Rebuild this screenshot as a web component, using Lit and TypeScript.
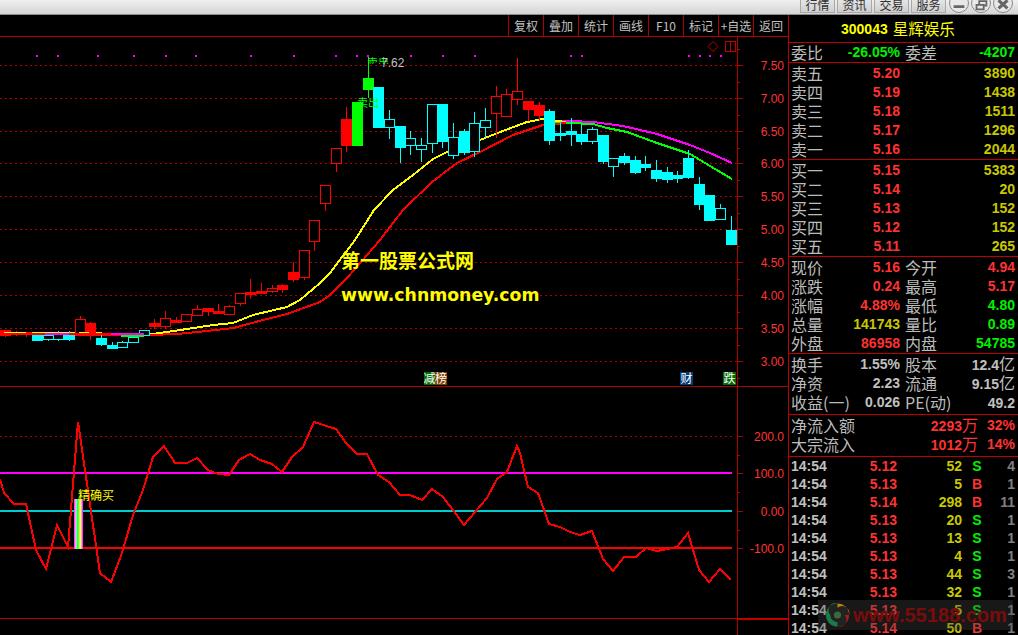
import { LitElement, html, svg, css } from "lit";
import { customElement } from "lit/decorators.js";

type Candle = [string, number, number, number, number];

const CANDLES: Candle[] = [
  ["r",330,335,330,336],["r",332,334,331,335],["r",332,334,332,336],["c",335,340,335,340],["C",335,339,334,340],
  ["C",333,339,331,340],["c",335,339,331,340],["R",319,334,316,334],["r",323,334,322,339],["c",338,344,334,345],
  ["c",345,348,342,348],["C",342,347,341,347],["C",337,342,337,342],["C",330,335,330,335],["r",323,326,319,328],
  ["R",318,326,311,328],["r",320,322,317,322],["R",314,321,314,321],["R",309,315,305,315],["r",308,311,308,315],
  ["r",311,313,304,313],["R",306,314,305,314],["R",293,303,293,305],["r",292,294,279,298],["r",291,293,283,293],
  ["R",288,291,285,292],["r",285,289,284,292],["r",272,279,262,281],["R",250,277,250,279],["R",220,241,220,250],
  ["R",185,203,185,210],["R",148,163,148,171],["r",119,145,107,151],["g",102,145,102,145],["g",78,89,57,97],
  ["c",87,127,87,127],["C",119,127,110,138],["c",126,147,126,162],["C",138,145,131,154],["C",145,149,138,161],
  ["C",104,143,104,152],["c",104,141,104,147],["C",137,155,123,158],["c",131,152,129,154],["C",123,151,112,156],
  ["C",120,127,108,137],["R",96,113,86,137],["R",94,116,89,116],["R",91,99,58,104],["r",101,109,101,120],
  ["r",105,115,102,120],["c",111,140,109,144],["c",133,135,121,140],["c",131,134,118,145],["c",134,141,124,144],
  ["C",129,141,127,143],["c",135,161,135,163],["C",158,166,158,176],["c",156,162,153,164],["c",160,172,156,173],
  ["c",164,167,156,170],["c",170,178,160,181],["c",172,179,167,182],["c",175,178,171,182],["c",158,177,150,178],
  ["c",184,204,177,209],["c",195,220,195,220],["C",208,219,204,219],["c",230,244,216,244],
];

const YELLOW = "0,333 50,333 153,334 187,329 213,325 233,323 253,315 287,307 300,300 320,283 330,273 355,240 374,210 393,190 413,175 433,159 447,152 480,140 500,132 527,122 543,119 566,122";
const RED = "0,334 150,335 177,334 207,331 233,328 267,319 287,314 320,302 330,295 348,277 380,240 403,210 432,182 457,163 480,152 513,135 543,125 566,123";
const MAGENTA = "555,121 571,121 593,122 623,126 657,134 690,145 710,153 732,163";
const GREEN = "555,122 571,123 593,124 607,128 627,132 657,143 690,154 710,166 732,179";
const INDICATOR = "0,479 4,493 14,504 26,504 36,550 46,569 57,525 68,547 78,422 100,573 111,582 122,553 133,515 143,490 153,457 164,446 175,463 187,463 197,458 208,470 218,474 229,475 239,460 250,454 260,460 272,464 282,472 292,457 303,447 314,422 336,429 346,443 357,454 367,454 378,475 389,482 400,495 410,495 422,500 432,489 443,497 453,510 464,525 487,498 497,479 507,472 517,446 520,453 528,487 538,493 549,524 560,527 570,532 580,535 592,531 603,559 613,571 624,557 636,557 646,548 657,551 667,549 677,547 688,533 699,570 709,582 720,569 731,580";

const PRICE_GRID = [["7.50",65.5],["7.00",98.5],["6.50",131.5],["6.00",163.5],["5.50",196.5],["5.00",229.5],["4.50",262.5],["4.00",295.5],["3.50",328.5],["3.00",361.5]] as [string, number][];
const LOW_AXIS = [["200.0",436.5],["100.0",473.5],["0.00",511.5],["-100.0",548.5]] as [string, number][];
const DOTS = [36,57,97,133,165,195,250,293,335,356,367,410,442,474,570,581,688,699,709,720];
const RAINBOW = ["#ff44ff","#ff99ff","#66ffcc","#33ff33","#66ff33","#ccff33","#ffff33","#ff99ff","#ff33ff"];

const SELL = [["卖五","5.20","3890"],["卖四","5.19","1438"],["卖三","5.18","1511"],["卖二","5.17","1296"],["卖一","5.16","2044"]];
const BUY = [["买一","5.15","5383"],["买二","5.14","20"],["买三","5.13","152"],["买四","5.12","152"],["买五","5.11","265"]];
const QUOTE = [
  ["现价","5.16","r","今开","4.94","r"],["涨跌","0.24","r","最高","5.17","r"],["涨幅","4.88%","r","最低","4.80","g"],
  ["总量","141743","y","量比","0.89","g"],["外盘","86958","r","内盘","54785","g"],
];
const STATS = [["换手","1.55%","","股本","12.4","亿"],["净资","2.23","","流通","9.15","亿"],["收益(一)","0.026","","PE(动)","49.2",""]];
const TICKS = [["5.12","52","S","4"],["5.13","5","B","1"],["5.14","298","B","11"],["5.13","20","S","1"],["5.13","13","S","1"],["5.13","4","S","1"],["5.13","44","S","3"],["5.13","32","S","1"],["5.13","5","S","1"],["5.14","50","B","1"]];
const TOOLS = ["复权","叠加","统计","画线","F10","标记","+自选","返回"];
const NAV = ["行情","资讯","交易","服务"];

const COLORS: Record<string, string> = { r: "#f00", R: "#f00", c: "#0ff", C: "#0ff", g: "#0f0" };

@customElement("app-root")
export class AppRoot extends LitElement {
  static styles = css`
    :host { display: block; width: 1018px; height: 635px; overflow: hidden; background: #000; position: relative;
      font-family: "Noto Sans CJK SC", "Liberation Sans", sans-serif; }
    .top { border-bottom: 1px solid #8c8c8c; background: linear-gradient(#f0f0f0, #d4d4d4); display: flex; justify-content: flex-end; align-items: flex-end; gap: 2px; padding: 0 5px 1px 0; box-sizing: content-box; overflow: hidden; height: 13px; }
    .nav { flex: none; width: 33px; height: 20px; border: 1px solid #a8a8a8; background: linear-gradient(#f4f4f4, #cfcfcf); font-size: 12px; line-height: 25px; color: #303030; text-align: center; overflow: hidden; }
    .nav + .round { margin-left: 1px; }
    .round { flex: none; width: 20px; height: 20px; box-sizing: border-box; border-radius: 50%; border: 1px solid #888; background: #e8e8e8; display: block; }
    .main { display: flex; height: 620px; }
    .left { width: 788px; flex: none; display: flex; flex-direction: column; }
    .tools { height: 21px; flex: none; border-bottom: 1px solid #b00000; display: flex; justify-content: flex-end; }
    .tool { flex: none; width: 34px; border-left: 1px solid #b00000; color: #c0c0c0; font-size: 12px; line-height: 21px; text-align: center; white-space: nowrap; }
    .chart { display: block; flex: none; }
    .ax { font: 12px "Liberation Sans", sans-serif; fill: #f33; text-anchor: end; }
    .big1 { font: 700 19px "Noto Sans CJK SC", sans-serif; fill: #ff0; }
    .big2 { font: 700 17.3px "DejaVu Sans", sans-serif; fill: #ff0; }
    .tag { font: 12px "Noto Sans CJK SC", sans-serif; fill: #fff; text-anchor: middle; }
    .buy { font: 12px "Noto Sans CJK SC", sans-serif; fill: #ff0; }
    .sig { font: 11px "Noto Sans CJK SC", sans-serif; fill: #0f0; }
    .hi { font: 12px "Liberation Sans", sans-serif; fill: #c0c0c0; }

    .panel { flex: 1; border-left: 1px solid #c00000; color: #c0c0c0; overflow: hidden; font: 700 14px "Liberation Sans", sans-serif; }
    .head { height: 27px; border-bottom: 1px solid #c00000; color: #ff0; display: flex; align-items: center; justify-content: flex-start; gap: 5px; padding-left: 52px; }
    .head b { font: 400 15.5px/1 "Noto Sans CJK SC", sans-serif; }
    .sect { border-bottom: 1px solid #c00000; }
    .pad { padding-top: 1px; }
    .pad3 { padding-top: 1px; padding-bottom: 2px; }
    .quad { display: grid; grid-template-columns: 48px 61px 41px 1fr; grid-auto-rows: 19px; height: 19px; line-height: 19px; padding: 0 3px 0 2px; align-items: center; white-space: nowrap; }
    .lbl { font: 400 16px/19px "Noto Sans CJK SC", sans-serif; color: #bcbcbc; }
    .lb2 { padding-left: 5px; }
    .val { text-align: right; }
    .r { color: #ff3232; } .g { color: #00f000; } .y { color: #c8c800; }
    .unit { font: 400 16px/1 "Noto Sans CJK SC", sans-serif; color: inherit; }
    .flow { display: grid; grid-template-columns: 1fr auto 37px; grid-auto-rows: 19px; height: 19px; line-height: 19px; padding: 0 3px 0 2px; white-space: nowrap; align-items: center; }
    .tick { display: grid; grid-template-columns: 50px 56px 65px 30px 1fr; height: 18px; line-height: 18px; padding: 0 3px 0 2px; }
    .tick .cnt { text-align: right; color: #808080; }
    .tick .side { text-align: center; }

    .wm { position: absolute; left: 818px; top: 600px; width: 195px; height: 30px; background: rgba(70,70,70,.35); display: flex; align-items: center; gap: 3px; padding-left: 7px; box-sizing: border-box; font: 700 20px/30px "Liberation Sans", sans-serif; color: #7a0c0c; white-space: nowrap; }
    .wm svg { flex: none; }
  `;

  private candle(c: Candle, i: number) {
    const [t, top, bot, hi, lo] = c;
    const x = Math.round(i * 10.67);
    const col = COLORS[t];
    const hollow = t === "R" || t === "C";
    const mid = x + 5.5;
    return svg`
      <line x1=${mid} x2=${mid} y1=${hi} y2=${lo + 1} stroke=${col} stroke-width="1"></line>
      <rect x=${hollow ? x + 0.5 : x} y=${hollow ? top + 0.5 : top} width=${hollow ? 10 : 11} height=${hollow ? bot - top : bot - top + 1}
        fill=${hollow ? "#000" : col} stroke=${hollow ? col : "none"} stroke-width="1"></rect>`;
  }

  private chart() {
    const minor = [...PRICE_GRID.slice(0, -1).map(([, y]) => y + 16.5), 49, 378];
    const lowMinor = [455, 492, 530];
    return html`<svg class="chart" width="788" height="598" viewBox="0 37 788 598" shape-rendering="crispEdges">
      <defs><clipPath id="flag"><rect x="360" y="56" width="40" height="8"></rect></clipPath></defs>
      ${DOTS.map((x) => svg`<rect x=${x} y="55" width="2" height="2" fill="#f0f"></rect>`)}
      ${PRICE_GRID.map(([, y]) => svg`<line x1="0" x2="737" y1=${y} y2=${y} stroke="#b00000" stroke-dasharray="2 3"></line>`)}
      <line x1="0" x2="732" y1="436.5" y2="436.5" stroke="#b00000" stroke-dasharray="2 3"></line>

      <polyline points=${MAGENTA} fill="none" stroke="#f0f" stroke-width="2"></polyline>
      <polyline points=${GREEN} fill="none" stroke="#0f0" stroke-width="2"></polyline>
      <polyline points=${YELLOW} fill="none" stroke="#ff0" stroke-width="2"></polyline>
      <polyline points=${RED} fill="none" stroke="#f00" stroke-width="2"></polyline>
      ${CANDLES.map((c, i) => this.candle(c, i))}
      <line x1="0" x2="45" y1="334" y2="334" stroke="#f00" stroke-width="2"></line>
      <line x1="69" x2="111" y1="334" y2="334" stroke="#f00" stroke-width="2"></line>
      <line x1="4" x2="26" y1="332.5" y2="332.5" stroke="#ff0"></line>
      <line x1="79" x2="89" y1="332.5" y2="332.5" stroke="#ff0"></line>
      <line x1="45" x2="69" y1="334" y2="334" stroke="#f0f" stroke-width="2"></line>
      <line x1="111" x2="144" y1="334" y2="334" stroke="#f0f" stroke-width="2"></line>
      <line x1="121" x2="144" y1="336" y2="336" stroke="#0f0" stroke-width="2"></line>

      <path d="M713 41.5 L718 46.5 L713 51.5 L708 46.5 Z" fill="none" stroke="#c00000" shape-rendering="auto"></path>
      <path d="M725.5 41.5 H735.5 V51.5 H725.5 Z M730.5 41.5 V51.5" fill="none" stroke="#c00000"></path>

      <text class="sig" x="367" y="67" clip-path="url(#flag)">卖出</text>
      <text class="hi" x="381" y="67">7.62</text>
      <text class="sig" x="357" y="107">卖出</text>

      <text class="big1" x="341" y="268">第一股票公式网</text>
      <text class="big2" x="341" y="301">www.chnmoney.com</text>

      <rect x="424" y="372" width="11" height="13" fill="#006c00"></rect>
      <rect x="435" y="372" width="12" height="13" fill="#7c4000"></rect>
      <text class="tag" x="429.5" y="383">减</text>
      <text class="tag" x="441" y="383">榜</text>
      <rect x="680" y="372" width="13" height="13" fill="#003c78"></rect>
      <text class="tag" x="686.5" y="383">财</text>
      <rect x="723" y="372" width="13" height="13" fill="#006c00"></rect>
      <text class="tag" x="729.5" y="383">跌</text>

      <line x1="0" x2="788" y1="386.5" y2="386.5" stroke="#b00000"></line>
      <line x1="0" x2="737" y1="618.5" y2="618.5" stroke="#b00000"></line>
      <line x1="737" x2="788" y1="618.5" y2="618.5" stroke="#c00000" stroke-width="2"></line>
      <line x1="737.5" x2="737.5" y1="36" y2="635" stroke="#b00000"></line>
      ${PRICE_GRID.map(([, y]) => svg`<line x1="737" x2="743" y1=${y} y2=${y} stroke="#b00000"></line>`)}
      ${minor.map((y) => svg`<line x1="737" x2="740" y1=${y} y2=${y} stroke="#b00000"></line>`)}
      ${LOW_AXIS.map(([, y]) => svg`<line x1="737" x2="743" y1=${y} y2=${y} stroke="#b00000"></line>`)}
      ${lowMinor.map((y) => svg`<line x1="737" x2="740" y1=${y + 0.5} y2=${y + 0.5} stroke="#b00000"></line>`)}
      ${PRICE_GRID.map(([t, y]) => svg`<text class="ax" x="784" y=${y + 4.5}>${t}</text>`)}
      ${LOW_AXIS.map(([t, y]) => svg`<text class="ax" x="784" y=${y + 4.5}>${t}</text>`)}

      <line x1="0" x2="732" y1="473" y2="473" stroke="#f0f" stroke-width="2"></line>
      <line x1="0" x2="732" y1="511" y2="511" stroke="#00cccc" stroke-width="2"></line>
      <line x1="0" x2="732" y1="548" y2="548" stroke="#f00" stroke-width="2"></line>
      ${RAINBOW.map((c, i) => svg`<rect x=${74 + i} y="499" width="1" height="50" fill=${c}></rect>`)}
      <polyline points=${INDICATOR} fill="none" stroke="#f00" stroke-width="2"></polyline>
      <text class="buy" x="78" y="500">精确买</text>
    </svg>`;
  }

  private quote(rows: string[][]) {
    return rows.map(([a, b, bc, c, d, dc]) => html`<div class="quad">
      <span class="lbl">${a}</span><span class="val ${bc}">${b}</span>
      <span class="lbl lb2">${c}</span><span class="val ${dc}">${d}</span></div>`);
  }

  private book(rows: string[][]) {
    return rows.map(([a, b, c]) => html`<div class="quad">
      <span class="lbl">${a}</span><span class="val r">${b}</span><span></span><span class="val y">${c}</span></div>`);
  }

  private panel() {
    return html`<div class="panel">
      <div class="head">300043<b>星辉娱乐</b></div>
      <div class="sect">${this.quote([["委比", "-26.05%", "g", "委差", "-4207", "g"]])}</div>
      <div class="sect pad">${this.book(SELL)}</div>
      <div class="sect pad">${this.book(BUY)}</div>
      <div class="sect pad">${this.quote(QUOTE)}</div>
      <div class="sect pad3">${STATS.map(([a, b, , c, d, u]) => html`<div class="quad">
        <span class="lbl">${a}</span><span class="val">${b}</span>
        <span class="lbl lb2">${c}</span><span class="val">${d}<span class="unit">${u}</span></span></div>`)}</div>
      <div class="sect pad3">
        <div class="flow"><span class="lbl">净流入额</span><span class="r">2293<span class="unit">万</span></span><span class="val r">32%</span></div>
        <div class="flow"><span class="lbl">大宗流入</span><span class="r">1012<span class="unit">万</span></span><span class="val r">14%</span></div>
      </div>
      ${TICKS.map(([p, v, s, n]) => html`<div class="tick"><span>14:54</span><span class="val r">${p}</span><span class="val y">${v}</span><span class="side ${s === "S" ? "g" : "r"}">${s}</span><span class="cnt">${n}</span></div>`)}
    </div>`;
  }

  private roundBtn(path: string, sw: number) {
    return html`<svg class="round" viewBox="0 0 20 20"><path d=${path} stroke="#666" stroke-width=${sw} fill="none"></path></svg>`;
  }

  render() {
    return html`
      <div class="top">
        ${NAV.map((n) => html`<div class="nav">${n}</div>`)}
        ${this.roundBtn("M4 14 H16", 3)}
        ${this.roundBtn("M5 12 H13 V17 H5 Z M8 12 V8 H16 V13 H13", 2)}
        ${this.roundBtn("M5 7 L15 16 M15 7 L5 16", 3.5)}
      </div>
      <div class="main">
        <div class="left">
          <div class="tools">${TOOLS.map((t) => html`<div class="tool">${t}</div>`)}</div>
          ${this.chart()}
        </div>
        ${this.panel()}
      </div>
      <div class="wm">
        <svg width="25" height="28" viewBox="0 0 28 28">
          <circle cx="14" cy="14" r="13" fill="#222"></circle>
          <path d="M14 1 A13 13 0 0 1 27 14 A8 8 0 0 0 14 6 Z" fill="#b8860b"></path>
          <path d="M27 14 A13 13 0 0 1 14 27 A8 8 0 0 0 22 14 Z" fill="#a81c1c"></path>
          <path d="M14 27 A13 13 0 0 1 1 14 A13 13 0 0 1 14 1 A8 8 0 0 0 6 14 A8 8 0 0 0 14 22 Z" fill="#1c7a4a"></path>
          <circle cx="14" cy="14" r="4" fill="#3a6a3a"></circle>
        </svg>
        <span>www.55188.com</span>
      </div>
    `;
  }
}
